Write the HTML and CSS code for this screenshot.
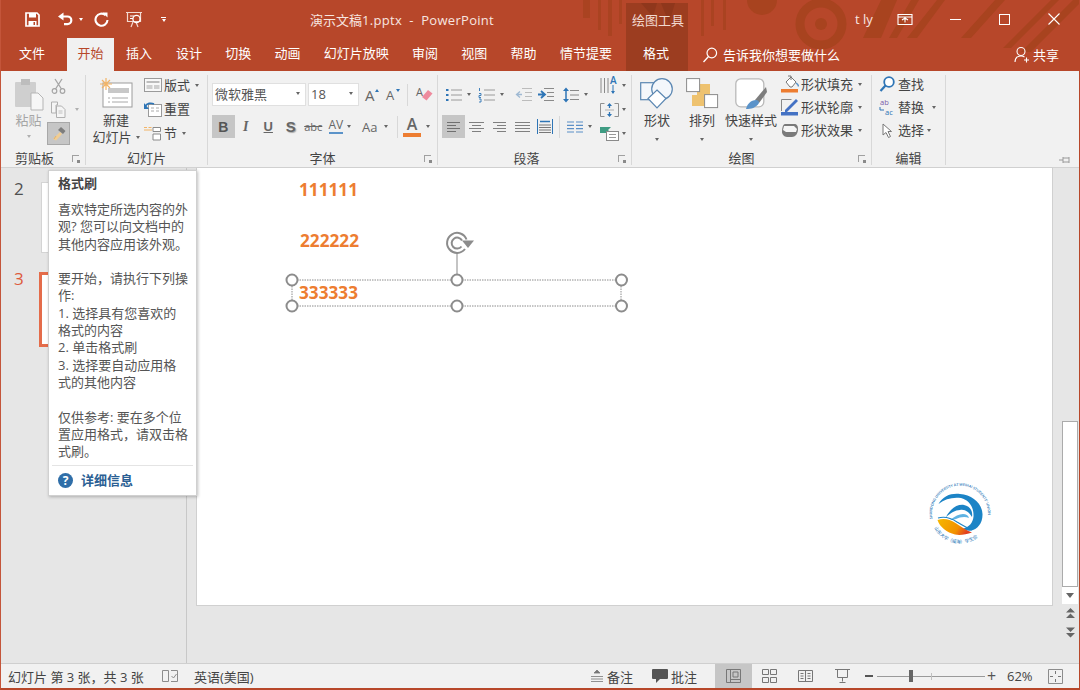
FILE: index.html
```html
<!DOCTYPE html>
<html lang="zh-CN">
<head>
<meta charset="utf-8">
<title>演示文稿1.pptx - PowerPoint</title>
<link rel="stylesheet" href="styles.css">
</head>
<body>
<div class="window">
  <header class="head">
    <svg class="head-art" width="1078" height="71" viewBox="0 0 1078 71">
      <rect x="625" y="3" width="62" height="68" fill="#9c3d20"/>
      <g fill="#a8431f" opacity=".8">
        <rect x="582" y="0" width="7" height="18"/><rect x="597" y="0" width="3" height="30"/><rect x="607" y="0" width="4" height="36"/><rect x="618" y="0" width="3" height="24"/>
        <rect x="700" y="0" width="3" height="36"/><rect x="710" y="0" width="3" height="26"/>
        <rect x="722" y="0" width="3" height="30"/>
      </g>
      <path d="M640 3l12 14 4-14zM660 3l8 20 6-20z" fill="#8f371c"/>
      <circle cx="761" cy="0" r="15" fill="#a8431f"/>
      <circle cx="820" cy="24" r="21" fill="none" stroke="#a8431f" stroke-width="9"/>
      <circle cx="820" cy="24" r="6" fill="#a8431f"/>
      <path d="M862 38L880 0h16l-16 38zM888 38l22-38h8L896 38zM906 38l30-38h8L916 38z" fill="#a8431f"/>
      <path d="M960 38l34-38h10L970 38zM1002 48L1050 0h8L1010 48zM1020 52L1072 0h6v4L1030 52z" fill="#a8431f"/>
    </svg>
    <div class="titlebar">
      <div class="qat">
        <svg class="ml24" width="15" height="15" viewBox="0 0 15 15"><path d="M1 1h11l2 2v11H1z" fill="none" stroke="#fff" stroke-width="1.7"/><rect x="4" y="1" width="7" height="4.5" fill="#fff"/><rect x="3.5" y="9" width="8" height="5" fill="#fff"/><rect x="8.5" y="10" width="1.5" height="3" fill="#b7472a"/></svg>
        <svg class="ml17" width="16" height="14" viewBox="0 0 16 14"><path d="M3 4.5h7.5a3.8 3.8 0 0 1 0 7.6H7" fill="none" stroke="#fff" stroke-width="2.2"/><path d="M6.5 .5L1 4.5l5.500 4z" fill="#fff"/></svg>
        <i class="caret caret-w ml6"></i>
        <svg class="ml11" width="15" height="15" viewBox="0 0 15 15"><path d="M11.5 3.2A6 6 0 1 0 13.5 8" fill="none" stroke="#fff" stroke-width="2.1"/><path d="M8.5 .5h5v5z" fill="#fff"/></svg>
        <svg class="ml16" width="19" height="17" viewBox="0 0 19 17"><path d="M1 1.5h16M2.5 1.5v9h13v-9M8 11l-2 5M11 11l2 5" fill="none" stroke="#f3d9d0" stroke-width="1.2"/><circle cx="11.5" cy="8" r="3.6" fill="none" stroke="#fff" stroke-width="1.3"/><path d="M5 5h4M5 7.500h3" stroke="#fff"/></svg>
        <span class="qat-more ml17"><i class="dash"></i><i class="caret caret-w"></i></span>
      </div>
      <div class="doc-title">演示文稿<span class="latin">1.pptx&nbsp; -&nbsp; PowerPoint</span></div>
      <div class="ctx-title">绘图工具</div>
      <div class="user">t ly</div>
      <svg class="ml24" width="16" height="13" viewBox="0 0 16 13"><path d="M1 1.500h14v10H1zM1 4h14M5 7l3-2 3 2M8 5.500v4" fill="none" stroke="#fff" stroke-width="1.100"/></svg>
      <i class="min"></i>
      <i class="max"></i>
      <svg class="close" width="12" height="12" viewBox="0 0 12 12"><path d="M.5.500l11 11M11.500.500l-11 11" stroke="#fff" stroke-width="1.100"/></svg>
    </div>
    <nav class="tabs">
      <span class="tab tab-file">文件</span>
      <span class="tab tab-on">开始</span>
      <span class="tab tab-ins">插入</span>
      <span class="tab tab-n">设计</span>
      <span class="tab tab-n">切换</span>
      <span class="tab tab-n">动画</span>
      <span class="tab tab-n">幻灯片放映</span>
      <span class="tab tab-n">审阅</span>
      <span class="tab tab-n">视图</span>
      <span class="tab tab-n">帮助</span>
      <span class="tab tab-n">情节提要</span>
      <span class="tab tab-fmt">格式</span>
      <svg class="search" width="16" height="16" viewBox="0 0 16 16"><circle cx="9.800" cy="6" r="4.800" fill="none" stroke="#fff" stroke-width="1.200"/><path d="M6.500 9.500L1.500 15" stroke="#fff" stroke-width="1.300"/></svg>
      <span class="tell">告诉我你想要做什么</span>
      <span class="share">
        <svg width="16" height="17" viewBox="0 0 16 17"><circle cx="7" cy="5.500" r="4" fill="none" stroke="#fff" stroke-width="1.100"/><path d="M1 16c0-4 2.500-6 6-6 1.500 0 2.500.3 3.500 1M10 14h5M12.500 11.500v5" fill="none" stroke="#fff" stroke-width="1.100"/></svg>
        共享
      </span>
    </nav>
  </header>

  <section class="ribbon">
    <div class="group g-clip">
      <div class="g-body">
        <div class="paste">
          <svg width="30" height="33" viewBox="0 0 30 33"><rect x="1" y="4" width="21" height="25" rx="1" fill="#cfcfcf"/><rect x="7" y="1" width="9" height="6" fill="#bdbdbd"/><path d="M17 15h7l5 5v12H17z" fill="#f6f6f6" stroke="#b5b5b5"/></svg>
          <span class="muted">粘贴</span>
          <i class="caret caret-l mt6"></i>
        </div>
        <div class="clip-col">
          <div class="clip-row"><svg width="15" height="16" viewBox="0 0 15 16"><circle cx="3.500" cy="13" r="2.300" fill="none" stroke="#a5a5a5" stroke-width="1.200"/><circle cx="11.500" cy="13" r="2.300" fill="none" stroke="#a5a5a5" stroke-width="1.200"/><path d="M4.500 11L11 1M10.500 11L4 1" stroke="#a5a5a5" stroke-width="1.300"/></svg></div>
          <div class="clip-row"><svg width="15" height="17" viewBox="0 0 15 17"><path d="M.500 1h6v3H5v8H.500z" fill="#f5f5f5" stroke="#b0b0b0"/><path d="M5.500 5h5l3.500 3.500v8h-8.500z" fill="#f5f5f5" stroke="#b0b0b0"/><path d="M7.500 10h4M7.500 12h4" stroke="#c0c0c0"/></svg><i class="caret caret-l ml9"></i></div>
          <div class="painter"><svg width="16" height="15" viewBox="0 0 16 15"><path d="M9 6l-7 7 3 1.500L11 8z" fill="#f1cd93"/><path d="M10 1l4.500 4-2.500 3-5-4z" fill="#7d7d7d"/><path d="M3 13l2-3" stroke="#e3b36a"/></svg></div>
        </div>
      </div>
      <div class="g-label lbl-clip">剪贴板<i class="launcher"></i></div>
    </div>

    <div class="group g-slide">
      <div class="g-body">
        <div class="big new-slide">
          <svg width="33" height="30" viewBox="0 0 33 30"><rect x="3" y="5" width="29" height="24" fill="#fff" stroke="#9c9c9c"/><rect x="8" y="10" width="21" height="5" fill="#c8c8c8"/><path d="M8 20h2M12 20h16M8 24h2M12 24h16" stroke="#a8a8a8"/><path d="M6 0v12M0 6h12M2 2l8 8M10 2l-8 8" stroke="#f2b466" stroke-width="1.200"/></svg>
          <span class="big-label mt4">新建</span>
          <span class="big-label">幻灯片<i class="caret ml4"></i></span>
        </div>
        <div class="stack stack-s">
          <div class="row"><svg class="mr2" width="18" height="14" viewBox="0 0 18 14"><rect x=".5" y=".5" width="17" height="13" fill="#f8f8f8" stroke="#9a9a9a"/><rect x="2.500" y="3" width="13" height="2" fill="#bdbdbd"/><rect x="2.500" y="7" width="6" height="4" fill="#cfcfcf"/><rect x="10" y="7" width="5.500" height="4" fill="#cfcfcf"/></svg>版式<i class="caret ml5"></i></div>
          <div class="row"><svg class="mr2" width="18" height="15" viewBox="0 0 18 15"><rect x="4.500" y="2.500" width="13" height="12" fill="#fff" stroke="#9a9a9a"/><path d="M7 6h3M7 9h3M12 6h3M12 9h3" stroke="#aaa"/><path d="M1 4.500C3 1 7 .5 10 2" fill="none" stroke="#2e75b6" stroke-width="1.600"/><path d="M0 1v6h5z" fill="#2e75b6"/></svg>重置</div>
          <div class="row"><svg class="mr2" width="18" height="15" viewBox="0 0 18 15"><path d="M0 1.500h3M4.500 1.500h3M0 4h8" stroke="#f2b466" stroke-width="1.200"/><path d="M9 1.500h7.500v4H9zM9 8h7.500v6H9z" fill="#fff" stroke="#8b8b8b"/></svg>节<i class="caret ml5"></i></div>
        </div>
      </div>
      <div class="g-label">幻灯片</div>
    </div>

    <div class="group g-font">
      <div class="g-body tworow">
        <div class="row rowf">
          <div class="combo c-font"><span>微软雅黑</span><i class="caret"></i></div>
          <div class="combo c-size"><span>18</span><i class="caret"></i></div>
          <span class="grow-a ml6">A<i class="up"></i></span>
          <span class="grow-a small-a ml7">A<i class="down"></i></span>
          <i class="sep sep-a"></i>
          <svg class="ml8 over" width="17" height="17" viewBox="0 0 17 17"><text x="0" y="10" class="letter-a">A</text><path d="M6 11l6-7 4.500 3.500-6 7z" fill="#ee8a9d"/></svg>
        </div>
        <div class="row rowf">
          <span class="cell on b">B</span>
          <span class="cell i">I</span>
          <span class="cell u">U</span>
          <span class="cell s">S</span>
          <span class="cell abc">abc</span>
          <span class="cell av">AV<i class="av-line"></i></span>
          <i class="caret"></i>
          <span class="aa">Aa</span>
          <i class="caret ml3"></i>
          <i class="sep sep-b"></i>
          <span class="color-a">A</span>
          <i class="caret ml5"></i>
        </div>
      </div>
      <div class="g-label">字体<i class="launcher"></i></div>
    </div>

    <div class="group g-para">
      <div class="g-body para-body">
        <div class="tworow para-left">
          <div class="row rowf">
            <svg class="ml7" width="17" height="16" viewBox="0 0 17 16"><path d="M6 3h11M6 8h11M6 13h11" stroke="#9a9a9a"/><path d="M1 3h2.500M1 8h2.500M1 13h2.500" stroke="#2e75b6" stroke-width="2"/></svg>
            <i class="caret ml5"></i>
            <svg class="ml7" width="17" height="16" viewBox="0 0 17 16"><path d="M6 3h11M6 8h11M6 13h11" stroke="#9a9a9a"/><path d="M1.500 1v3M1 6.500h2v2H1v2h2M1 12h2v3H1" fill="none" stroke="#2e75b6" stroke-width=".9"/></svg>
            <i class="caret ml5"></i>
            <svg class="ml11" width="17" height="15" viewBox="0 0 17 15"><path d="M7 1.500h10M10 5.500h7M10 9.500h7M7 13.500h10" stroke="#bcbcbc"/><path d="M7 7.500H2M5 4.500L1.500 7.500 5 10.500" fill="none" stroke="#9fb9d3" stroke-width="1.300"/></svg>
            <svg class="ml5" width="17" height="15" viewBox="0 0 17 15"><path d="M7 1.500h10M10 5.500h7M10 9.500h7M7 13.500h10" stroke="#8a8a8a"/><path d="M1 7.500h6M4 4l4 3.500L4 11" fill="none" stroke="#2e75b6" stroke-width="1.800"/></svg>
            <svg class="ml9" width="16" height="16" viewBox="0 0 16 16"><path d="M7 3.500h9M7 8h9M7 12.500h9" stroke="#8a8a8a"/><path d="M3 2v12" stroke="#2e75b6" stroke-width="1.500"/><path d="M0 4l3-3.500L6 4zM0 12l3 3.500L6 12z" fill="#2e75b6"/></svg>
            <i class="caret ml5"></i>
          </div>
          <div class="row rowf">
            <span class="cell on"><svg width="13" height="10" viewBox="0 0 13 10"><path d="M0 .5h13M0 3.500h9M0 6.500h13M0 9.500h9" stroke="#707070"/></svg></span>
            <svg class="ml4" width="15" height="10" viewBox="0 0 15 10"><path d="M0 .5h15M3 3.500h9M0 6.500h15M3 9.500h9" stroke="#808080"/></svg>
            <svg class="ml9" width="13" height="10" viewBox="0 0 13 10"><path d="M0 .5h13M4 3.500h9M0 6.500h13M4 9.500h9" stroke="#808080"/></svg>
            <svg class="ml9" width="15" height="10" viewBox="0 0 15 10"><path d="M0 .5h15M0 3.500h15M0 6.500h15M0 9.500h15" stroke="#808080"/></svg>
            <svg class="ml7" width="16" height="15" viewBox="0 0 16 15"><path d="M.5 0v15M15.500 0v15" stroke="#2e75b6"/><path d="M3 2.500h10" stroke="#2e75b6" stroke-width="1.500"/><path d="M2 6h12M2 8.500h12M2 11h12M2 13.500h12" stroke="#777"/></svg>
            <i class="sep sep-c"></i>
            <svg class="ml7" width="16" height="12" viewBox="0 0 16 12"><path d="M0 1h7M9 1h7M0 4.300h7M9 4.300h7M0 7.700h7M9 7.700h7M0 11h7M9 11h7" stroke="#5b8fc7" stroke-width="1.200"/></svg>
            <i class="caret ml5"></i>
          </div>
        </div>
        <div class="para-right">
          <div class="row"><svg class="over" width="19" height="19" viewBox="0 0 19 19"><path d="M1 2v15M4.500 2v15M8 2v15" stroke="#8a8a8a"/><path d="M13 17V9" stroke="#2e75b6"/><path d="M11 15l2 3 2-3z" fill="#2e75b6"/><text x="10" y="8" class="blue-a">A</text></svg><i class="caret ml3"></i></div>
          <div class="row"><svg width="19" height="16" viewBox="0 0 19 16"><path d="M.5 1.500h4M14.500 1.500h4v13h-4M4.500 14.500h-4v-13" fill="none" stroke="#909090"/><path d="M5 8h9" stroke="#b0b0b0"/><path d="M9.500 2v4M9.500 10v4" stroke="#2e75b6" stroke-width="1.300"/><path d="M7 4l2.500-3L12 4zM7 12l2.500 3 2.500-3z" fill="#2e75b6"/></svg><i class="caret ml3"></i></div>
          <div class="row"><svg width="19" height="15" viewBox="0 0 19 15"><path d="M0 1h11l-3 3 3 3H0z" fill="#3f9c83"/><rect x="6.500" y="5.500" width="12" height="9" fill="#fff" stroke="#8a8a8a"/><path d="M9 8.500h7M9 11.500h7" stroke="#999"/></svg><i class="caret ml3"></i></div>
        </div>
      </div>
      <div class="g-label lbl-para">段落<i class="launcher"></i></div>
    </div>

    <div class="group g-draw">
      <div class="g-body">
        <div class="big shape-btn">
          <svg width="34" height="32" viewBox="0 0 34 32"><rect x=".700" y="4.700" width="21" height="17" fill="#f4f7fb" stroke="#5b87b2" stroke-width="1.200"/><circle cx="22" cy="11" r="10.300" fill="#f4f7fb" stroke="#5b87b2" stroke-width="1.200"/><path d="M17 12l9 8.500-9 9.500-9-9.500z" fill="#fff" stroke="#5b87b2" stroke-width="1.200"/></svg>
          <span class="big-label mt2">形状</span>
          <i class="caret mt9"></i>
        </div>
        <div class="big arrange-btn">
          <svg width="33" height="31" viewBox="0 0 33 31"><rect x="11" y="6" width="13" height="13" fill="#eec26f"/><rect x="6" y="17" width="13" height="11" fill="#eec26f"/><rect x=".6" y=".6" width="13" height="13" fill="#fff" stroke="#8b8b8b"/><rect x="18.600" y="16.600" width="13" height="13" fill="#fff" stroke="#8b8b8b"/></svg>
          <span class="big-label mt3">排列</span>
          <i class="caret mt9"></i>
        </div>
        <div class="big quick-btn">
          <svg width="33" height="33" viewBox="0 0 33 33"><rect x=".8" y=".8" width="28" height="28" rx="5" fill="#fff" stroke="#b9b9b9" stroke-width="1.300"/><path d="M20 22l11-13 1 5-8 11z" fill="#7d7d7d"/><path d="M11 31c1-5 5-9 10-9 2 0 3 1 3 3-3 5-8 6-13 6z" fill="#5b93c9"/></svg>
          <span class="big-label mt1">快速样式</span>
          <i class="caret mt9"></i>
        </div>
        <div class="stack stack-t draw-col">
          <div class="row"><svg class="mr2" width="18" height="18" viewBox="0 0 18 18"><path d="M5 7l5-5 5 5-4 5H9z" fill="#fff" stroke="#777"/><path d="M7 1h3v4" fill="none" stroke="#777"/><path d="M15 8c1.500 1 2.500 2 2.500 3.500" fill="none" stroke="#5b93c9" stroke-width="1.500"/><rect y="14" width="17" height="3.500" fill="#ed7d31"/></svg>形状填充<i class="caret ml5"></i></div>
          <div class="row"><svg class="mr2" width="18" height="18" viewBox="0 0 18 18"><path d="M.5 13V1.500h10" fill="none" stroke="#888"/><path d="M4 12L15 1l2 2L6 14H4z" fill="#4472c4"/><rect y="14" width="17" height="3.500" fill="#4472c4"/></svg>形状轮廓<i class="caret ml5"></i></div>
          <div class="row"><svg class="mr2" width="18" height="16" viewBox="0 0 18 16"><path d="M4 2h9c3 0 4 2 4 5 0 5-3 8-6 8H6c-3 0-5-3-5-5 0-4 1-8 3-8z" fill="#7a7a7a"/><path d="M3 4h10l3 3-1 3H5L2 8z" fill="#f5f5f5"/></svg>形状效果<i class="caret ml5"></i></div>
        </div>
      </div>
      <div class="g-label lbl-draw">绘图<i class="launcher"></i></div>
    </div>

    <div class="group g-edit">
      <div class="g-body">
        <div class="stack stack-t">
          <div class="row"><svg class="mr3" width="16" height="16" viewBox="0 0 16 16"><circle cx="10" cy="6" r="4.800" fill="#fff" stroke="#2e75b6" stroke-width="1.800"/><path d="M6.500 9.500L1.500 15" stroke="#2e75b6" stroke-width="2.200"/></svg>查找</div>
          <div class="row"><svg class="mr3 over" width="16" height="16" viewBox="0 0 16 16"><text x="1" y="6" class="ab">ab</text><text x="6" y="16" class="ac">ac</text><path d="M1 8v3h4" fill="none" stroke="#2e75b6"/></svg>替换<i class="caret ml8"></i></div>
          <div class="row"><svg class="ml3 mr6" width="10" height="15" viewBox="0 0 10 15"><path d="M1 1v11l3-2.500 2.500 5 2-1-2.500-5h3.500z" fill="#fff" stroke="#777"/></svg>选择<i class="caret ml3"></i></div>
        </div>
      </div>
      <div class="g-label lbl-edit">编辑</div>
    </div>
    <svg class="pin" width="12" height="8" viewBox="0 0 12 8"><path d="M0 4h4M4 1v6M4 2h6M4 6h6M10 1v6" fill="none" stroke="#9a9a9a"/></svg>
  </section>

  <main class="main">
    <aside class="pane">
      <div class="thumb-row">
        <span class="num">2</span>
        <div class="thumb"></div>
      </div>
      <div class="thumb-row thumb-row-on">
        <span class="num num-on">3</span>
        <div class="thumb thumb-on"></div>
      </div>
      <div class="tip">
        <div class="tip-title">格式刷</div>
        <p class="tip-p">喜欢特定所选内容的外<br>观? 您可以向文档中的<br>其他内容应用该外观。</p>
        <p class="tip-p">要开始，请执行下列操<br>作:<br>1. 选择具有您喜欢的<br>格式的内容<br>2. 单击格式刷<br>3. 选择要自动应用格<br>式的其他内容</p>
        <p class="tip-p">仅供参考: 要在多个位<br>置应用格式，请双击格<br>式刷。</p>
        <div class="tip-foot">
          <span class="help">?</span>
          <span class="more">详细信息</span>
        </div>
      </div>
    </aside>
    <div class="stage">
      <div class="slide">
        <div class="txt t1">111111</div>
        <div class="txt t2">222222</div>
        <div class="txt t3">333333</div>
        <svg class="sel" width="350" height="90" viewBox="0 0 350 90">
          <path d="M7 53h329v26H7z" fill="none" stroke="#8c8c8c" stroke-dasharray="1.500 1"/>
          <path d="M172 26v22" stroke="#c4c4c4" stroke-width="2"/>
          <g fill="none" stroke="#8c8c8c" stroke-width="2">
            <path d="M181.500 12.500A10 10 0 1 0 180 22"/>
            <path d="M177 13.500A5.500 5.500 0 1 0 176.500 19.500"/>
          </g>
          <path d="M177 13.500h12L183 21z" fill="#8c8c8c"/>
          <g fill="#fff" stroke="#8c8c8c" stroke-width="2">
            <circle cx="7" cy="53" r="5.500"/><circle cx="172" cy="53" r="5.500"/><circle cx="336.500" cy="53" r="5.500"/>
            <circle cx="7" cy="79" r="5.500"/><circle cx="172" cy="79" r="5.500"/><circle cx="336.500" cy="79" r="5.500"/>
          </g>
        </svg>
        <svg class="logo" width="64" height="64" viewBox="0 0 64 64">
          <defs>
            <path id="ring" d="M4.500 37A28 28 0 1 1 59.500 37"/>
            <path id="ring2" d="M5 43A29 29 0 0 0 59 43"/>
            <linearGradient id="gold" x1="0" x2="1" y1="0" y2=".3"><stop offset="0" stop-color="#f6b800"/><stop offset=".7" stop-color="#f29100"/><stop offset="1" stop-color="#e2401f"/></linearGradient>
          </defs>
          <text class="logo-t"><textPath href="#ring">SHANDONG UNIVERSITY AT WEIHAI STUDENTS' UNION</textPath></text>
          <path d="M10.500 22C15 14 23 11 32 12c12 1 22 9 22.500 20 .3 9-5 15-11 16.500-3 .5-6 .2-8.500-2 6-1 10-6 10.500-12C46 25 41 18 33 16c-9-1-16 1-22.500 6z" fill="#1c84c6"/>
          <path d="M18 35c4-8 11-13 18-12 6 1 9 6 8 12-3-5-7-8-12-7-5 0-9 3-14 7z" fill="#1c84c6"/>
          <path d="M22 38c5-4 9-6 13-6 3 0 5 1 6 4-4-2-9-1-13 1-2 .5-4 1-6 1z" fill="#5fb3e3"/>
          <path d="M9.500 38c6-2 12-1 18 3 5 3 10 7 16.500 9.500-6 2-12 3-17 2-8-2-15-7-17.500-14.500z" fill="url(#gold)"/>
          <path d="M10 36c7-2 13 0 19 4 5 3 10 6 15 8" fill="none" stroke="#1c84c6" stroke-width="1.200"/>
          <text class="logo-c"><textPath href="#ring2" startOffset="3">山东大学（威海）学生会</textPath></text>
        </svg>
      </div>
      <div class="scroll">
        <div class="track"></div>
        <div class="thumbbar"></div>
        <div class="sbtn"><i class="caret caret-d"></i></div>
        <svg class="page" width="11" height="11" viewBox="0 0 11 11"><path d="M5.500 0L10 4.500H1zM5.500 5.500L10 10H1z" fill="#666"/></svg>
        <svg class="page page2" width="11" height="11" viewBox="0 0 11 11"><path d="M5.500 5L10 .5H1zM5.500 10.500L10 6H1z" fill="#666"/></svg>
      </div>
    </div>
  </main>

  <footer class="status">
    <span class="st-count">幻灯片 第 3 张，共 3 张</span>
    <svg class="st-book" width="16" height="14" viewBox="0 0 16 14"><path d="M.5 1.500h6v11h-6zM9 1.500h6.500v11H9" fill="none" stroke="#8c8c8c"/><path d="M9.500 7l2 2 3-4" fill="none" stroke="#8c8c8c"/></svg>
    <span class="st-lang">英语(美国)</span>
    <div class="st-right">
      <span class="st-notes"><svg width="12" height="12" viewBox="0 0 12 12"><path d="M3 3l3-3 3 3zM0 6.500h12M0 9h12M0 11.500h12" fill="#777" stroke="#777" stroke-width=".8"/></svg>备注</span>
      <span class="st-comm"><svg width="16" height="14" viewBox="0 0 16 14"><path d="M1 0h14a1 1 0 0 1 1 1v8a1 1 0 0 1-1 1H8l-4 4v-4H1a1 1 0 0 1-1-1V1a1 1 0 0 1 1-1z" fill="#555"/></svg>批注</span>
      <span class="view view-on"><svg width="15" height="14" viewBox="0 0 15 14"><path d="M.5.500h14v13H.500zM4.500.500v13M4.500 10.500h10M7 3h5v5H7z" fill="none" stroke="#777"/></svg></span>
      <svg class="v-sort" width="15" height="14" viewBox="0 0 15 14"><path d="M.5.500h6v5h-6zM8.500.500h6v5h-6zM.5 8.500h6v5h-6zM8.500 8.500h6v5h-6z" fill="none" stroke="#777"/></svg>
      <svg class="v-read" width="15" height="14" viewBox="0 0 15 14"><path d="M.5 1.500h14v11H.500zM7.500 1.500v11M2.500 4.500h3M2.500 7h3M2.500 9.500h3M9.500 4.500h3M9.500 7h3M9.500 9.500h3" fill="none" stroke="#777"/></svg>
      <svg class="v-show" width="15" height="14" viewBox="0 0 15 14"><path d="M0 .5h15M2.500 .5v8h10v-8M7.500 8.500v4M4.500 13.500h6" fill="none" stroke="#777"/></svg>
      <i class="z-minus"></i>
      <div class="z-track"><i class="z-tick"></i><i class="z-thumb"></i></div>
      <span class="z-plus">+</span>
      <span class="z-val">62%</span>
      <svg class="v-fit" width="15" height="15" viewBox="0 0 15 15"><path d="M.5.500h14v14H.500z" fill="none" stroke="#8c8c8c"/><path d="M7.500 2v3M7.500 10v3M2 7.500h3M10 7.500h3" stroke="#777"/></svg>
    </div>
  </footer>
</div>
</body>
</html>
```

FILE: styles.css
```css
* { box-sizing: border-box; }
html, body { margin: 0; padding: 0; }
body {
  width: 1080px;
  height: 690px;
  overflow: hidden;
  font-family: "Open Sans", "Noto Sans CJK SC", sans-serif;
  font-size: 13px;
  color: #444;
}
p { margin: 0; }
i { display: block; font-style: normal; }
svg { display: block; flex: none; }
svg.over { overflow: visible; }

.window {
  width: 1080px;
  height: 690px;
  display: flex;
  flex-direction: column;
  border-left: 1px solid #c4553a;
  border-right: 1px solid #b7472a;
  border-bottom: 2px solid #b7472a;
  background: #e6e6e6;
  overflow: hidden;
}

.ml2 { margin-left: 2px; } .ml3 { margin-left: 3px; } .ml4 { margin-left: 4px; }
.ml5 { margin-left: 5px; } .ml6 { margin-left: 6px; } .ml7 { margin-left: 7px; }
.ml8 { margin-left: 8px; } .ml9 { margin-left: 9px; } .ml11 { margin-left: 11px; }
.ml16 { margin-left: 16px; } .ml17 { margin-left: 17px; } .ml24 { margin-left: 24px; }
.mr2 { margin-right: 2px; } .mr3 { margin-right: 3px; } .mr6 { margin-right: 6px; }
.mt1 { margin-top: 1px; } .mt2 { margin-top: 2px; } .mt3 { margin-top: 3px; } .mt4 { margin-top: 4px; }
.mt6 { margin-top: 6px; } .mt9 { margin-top: 9px; }

.caret {
  width: 0; height: 0;
  flex: none;
  border-left: 2.5px solid transparent;
  border-right: 2.5px solid transparent;
  border-top: 3px solid #666;
}
.caret-w { border-top-color: #fff; }
.caret-l { border-top-color: #b0b0b0; }
.caret-d { border-left-width: 4px; border-right-width: 4px; border-top-width: 5px; }

/* header */
.head {
  position: relative;
  height: 71px;
  flex: none;
  background: #b7472a;
  color: #fff;
}
.head-art { position: absolute; left: 0; top: 0; }
.titlebar {
  position: relative;
  height: 38px;
  display: flex;
  align-items: center;
}
.qat { width: 309px; display: flex; align-items: center; flex: none; }
.qat-more { display: flex; flex-direction: column; gap: 1px; align-items: center; }
.dash { width: 5px; height: 1px; background: #fff; }
.doc-title { width: 322px; flex: none; color: #f7e6e0; white-space: nowrap; }
.latin { letter-spacing: .3px; }
.ctx-title { width: 52px; flex: none; color: #f1d8cf; white-space: nowrap; }
.user { margin-left: 171px; width: 18px; white-space: nowrap; color: #f7e6e0; }
.min { margin-left: 37px; width: 11px; height: 1px; background: #fff; }
.max { margin-left: 38px; width: 11px; height: 11px; border: 1px solid #fff; }
.close { margin-left: 38px; }

.tabs {
  position: relative;
  height: 33px;
  display: flex;
  align-items: center;
  padding-left: 6px;
  color: #fff;
  white-space: nowrap;
}
.tab { height: 33px; line-height: 31px; padding: 0 12px; flex: none; }
.tab-file { width: 51px; }
.tab-on {
  margin-left: 9px;
  width: 47px;
  padding: 0 10.5px;
  background: #f1f1f1;
  color: #b7472a;
}
.tab-ins { padding-right: 12.75px; }
.tab-n { padding: 0 12px; margin-left: -.75px; }
.tab-fmt { margin-left: 2px; padding: 0 17px; width: 62px; }
.search { margin-left: 14px; }
.tell { margin-left: 5px; }
.share { margin-left: 174px; display: flex; align-items: center; gap: 3px; }

/* ribbon */
.ribbon {
  position: relative;
  height: 97px;
  flex: none;
  display: flex;
  padding: 4px 0 2px;
  background: #f1f1f1;
  border-bottom: 1px solid #d2d2d2;
  line-height: 18px;
  white-space: nowrap;
}
.group {
  position: relative;
  border-right: 1px solid #d8d8d8;
  flex: none;
  display: flex;
  flex-direction: column;
}
.g-clip { width: 85px; }
.g-slide { width: 122px; }
.g-font { width: 230px; }
.g-para { width: 194px; }
.g-draw { width: 240px; }
.g-edit { width: 74px; }
.g-body { height: 75px; display: flex; flex: none; }
.g-label {
  position: relative;
  height: 16px;
  line-height: 16px;
  text-align: center;
}
.lbl-clip { text-align: left; padding-left: 14px; }
.lbl-para { padding-right: 16px; }
.lbl-draw { padding-right: 20px; }
.launcher {
  position: absolute;
  right: 6px;
  top: 5px;
  width: 7px;
  height: 7px;
  border-left: 1px solid #a0a0a0;
  border-top: 1px solid #a0a0a0;
}
.launcher::after {
  content: "";
  position: absolute;
  right: -1px;
  bottom: -1px;
  width: 3px;
  height: 3px;
  background: #8a8a8a;
}
.stack { display: flex; flex-direction: column; gap: 2px; }
.stack .row { height: 22px; }
.stack-s { margin-top: -1px; }
.stack-t { gap: 1px; margin-top: -2px; }
.row { display: flex; align-items: center; }
.muted { color: #a6a6a6; }
.paste {
  margin-left: 12px;
  width: 31px;
  display: flex;
  flex-direction: column;
  align-items: center;
  padding-top: 3px;
}
.clip-col { margin-left: 3px; width: 34px; }
.clip-row { height: 22px; display: flex; align-items: center; padding-left: 4px; margin-bottom: 1px; }
.painter {
  width: 23px;
  height: 23px;
  margin-top: 2px;
  background: #c6c6c6;
  border: 1px solid #a8a8a8;
  display: flex;
  align-items: center;
  justify-content: center;
}
.big { display: flex; flex-direction: column; align-items: center; padding-top: 3px; }
.big-label { display: flex; align-items: center; line-height: 17px; }
.new-slide { margin-left: 4px; width: 52px; margin-right: 2px; }
.tworow { display: flex; flex-direction: column; gap: 9px; padding-top: 8px; }
.rowf { height: 23px; }
.g-font .rowf { padding-left: 4px; }
.combo {
  height: 23px;
  background: #fff;
  border: 1px solid #e0e0e0;
  display: flex;
  align-items: center;
  justify-content: space-between;
  padding: 0 5px 2px 2px;
  color: #555;
}
.c-font { width: 94px; }
.c-size { width: 51px; margin-left: 2px; }
.grow-a, .small-a {
  position: relative;
  width: 14px;
  font-size: 15px;
  color: #666;
  line-height: 18px;
}
.small-a { font-size: 13px; }
.up, .down {
  position: absolute;
  right: 0; top: 3px;
  width: 0; height: 0;
  border-left: 2.5px solid transparent;
  border-right: 2.5px solid transparent;
}
.up { border-bottom: 3px solid #2e75b6; }
.down { border-top: 3px solid #2e75b6; }
.sep { width: 1px; background: #d8d8d8; flex: none; }
.sep-a { height: 22px; margin-left: 7px; }
.sep-b { height: 22px; margin-left: 9px; margin-right: 5px; }
.sep-c { height: 22px; margin-left: 6px; }
.letter-a { font-size: 11px; fill: #666; font-family: "Open Sans", sans-serif; }
.blue-a { font-size: 10px; font-weight: 600; fill: #2e75b6; font-family: "Open Sans", sans-serif; }
.ab { font-size: 7.5px; fill: #7a5ba8; font-family: "Open Sans", sans-serif; }
.ac { font-size: 7.5px; fill: #2e75b6; font-family: "Open Sans", sans-serif; }
.cell {
  width: 22.5px;
  height: 23px;
  display: flex;
  align-items: center;
  justify-content: center;
  flex: none;
  color: #666;
  position: relative;
}
.on { background: #c6c6c6; }
.b { font-weight: 700; font-family: "Liberation Sans", sans-serif; font-size: 14px; color: #555; }
.i { font-style: italic; font-weight: 700; font-family: "Liberation Serif", serif; font-size: 14px; }
.u { text-decoration: underline; font-weight: 700; font-family: "Liberation Sans", sans-serif; }
.s { font-weight: 700; font-size: 15px; text-shadow: 1px 1px 1px #aaa; font-family: "Liberation Sans", sans-serif; }
.abc { font-size: 11px; text-decoration: line-through; }
.av { font-size: 12px; line-height: 12px; padding-bottom: 3px; }
.av-line { position: absolute; left: 4px; right: 4px; bottom: 4px; height: 2px; background: #5b93c9; }
.aa { margin-left: 11px; font-size: 13px; color: #666; width: 19px; }
.color-a {
  width: 18px;
  height: 21px;
  font-size: 16px;
  line-height: 17px;
  font-weight: 600;
  text-align: center;
  color: #666;
  border-bottom: 4px solid #ed7d31;
  flex: none;
}

.para-body { justify-content: space-between; }
.para-left .rowf { padding-left: 4px; }
.para-left svg.ml7:first-child { margin-left: 3px; }
.para-right {
  display: flex;
  flex-direction: column;
  gap: 5px;
  padding-top: 1px;
  margin-right: 5px;
}
.para-right .row { height: 19px; }

.shape-btn { margin-left: 8px; width: 34px; }
.arrange-btn { margin-left: 10px; width: 36px; }
.quick-btn { margin-left: 5px; width: 52px; }
.draw-col { margin-left: 4px; }
.g-edit .g-body { padding-left: 7px; }
.pin { position: absolute; left: 1058px; top: 85px; }

/* main */
.main { height: 495px; display: flex; flex: none; }
.pane {
  position: relative;
  width: 186px;
  flex: none;
  border-right: 1px solid #c8c8c8;
  padding-top: 14px;
  overflow: visible;
  z-index: 2;
}
.thumb-row { display: flex; height: 71px; }
.thumb-row-on { margin-top: 19px; height: 75px; }
.num {
  width: 40px;
  padding: 0 0 0 13px;
  font-size: 17px;
  line-height: 14px;
  color: #505050;
  flex: none;
}
.num-on { color: #dd5a3c; width: 38px; }
.thumb { width: 130px; background: #fff; border: 1px solid #d4d4d4; }
.thumb-on { border: 3px solid #e46c4a; background: #fff; }
.tip {
  position: absolute;
  left: 47px;
  top: 2px;
  width: 149px;
  height: 326px;
  background: #fff;
  border: 1px solid #d0d0d0;
  box-shadow: 1px 1px 3px rgba(0,0,0,.25);
  padding: 4px 0 0 9px;
  line-height: 17.3px;
  white-space: nowrap;
  color: #555;
}
.tip-title { font-weight: 700; height: 17px; margin-bottom: 9px; color: #444; }
.tip-p { margin-bottom: 17.3px; }
.tip-foot {
  position: absolute;
  left: 3px; right: 3px; top: 294px;
  height: 30px;
  border-top: 1px solid #e4e4e4;
  display: flex;
  align-items: center;
  padding-left: 6px;
  gap: 8px;
}
.help {
  width: 15px; height: 15px;
  border-radius: 50%;
  background: #2f6ea8;
  color: #fff;
  text-align: center;
  font-weight: 700;
  font-size: 12px;
  line-height: 15px;
}
.more { font-weight: 700; color: #2b5f94; }

.stage { flex: 1; display: flex; padding-left: 10px; }
.slide {
  position: relative;
  width: 855px;
  height: 437px;
  flex: none;
  background: #fff;
  box-shadow: 0 0 0 1px #d0d0d0;
}
.txt {
  position: absolute;
  left: 102px;
  font-family: "Open Sans", sans-serif;
  font-weight: 700;
  font-size: 17.2px;
  line-height: 20px;
  color: #ed7d31;
}
.t1 { top: 12px; }
.t2 { top: 63px; left: 103px; }
.t3 { top: 115px; }
.sel { position: absolute; left: 88px; top: 59px; overflow: visible; }
.logo { position: absolute; left: 731px; top: 314px; }
.logo-t { font-size: 3.6px; font-weight: 600; fill: #1c74b6; font-family: "Open Sans", sans-serif; }
.logo-c { font-size: 4.6px; fill: #1c74b6; font-family: "Noto Sans CJK SC", sans-serif; }

.scroll {
  width: 16px;
  margin-left: 10px;
  flex: none;
  display: flex;
  flex-direction: column;
  align-items: center;
}
.track { height: 253px; width: 16px; flex: none; }
.thumbbar { height: 166px; width: 16px; flex: none; background: #fff; border: 1px solid #ababab; }
.sbtn {
  height: 17px;
  width: 16px;
  flex: none;
  background: #fff;
  display: flex;
  align-items: center;
  justify-content: center;
}
.page { margin-top: 4px; }
.page2 { margin-top: 8px; }

/* status */
.status {
  height: 25px;
  flex: none;
  display: flex;
  align-items: center;
  background: #f1f1f1;
  border-top: 1px solid #cfcfcf;
  white-space: nowrap;
  color: #444;
}
.st-count { margin-left: 7px; width: 136px; }
.st-book { margin-left: 18px; }
.st-lang { margin-left: 16px; }
.st-right { margin-left: auto; display: flex; align-items: center; height: 24px; }
.st-notes, .st-comm { display: flex; align-items: center; gap: 4px; }
.st-comm { margin-left: 19px; gap: 3px; }
.view { width: 37px; height: 24px; margin-left: 18px; display: flex; align-items: center; justify-content: center; }
.view-on { background: #c6c6c6; }
.v-sort { margin-left: 10px; }
.v-read { margin-left: 21px; }
.v-show { margin-left: 22px; }
.z-minus { width: 8px; height: 2px; background: #555; margin-left: 15px; }
.z-track { position: relative; width: 108px; height: 1px; background: #9a9a9a; margin-left: 4px; }
.z-tick { position: absolute; left: 54px; top: -3px; width: 1px; height: 7px; background: #c0c0c0; }
.z-thumb { position: absolute; left: 32px; top: -6px; width: 4px; height: 12px; background: #666; }
.z-plus { margin-left: 2px; font-size: 16px; color: #555; width: 10px; line-height: 16px; }
.z-val { margin-left: 10px; width: 28px; }
.v-fit { margin-left: 13px; margin-right: 16px; }
```
